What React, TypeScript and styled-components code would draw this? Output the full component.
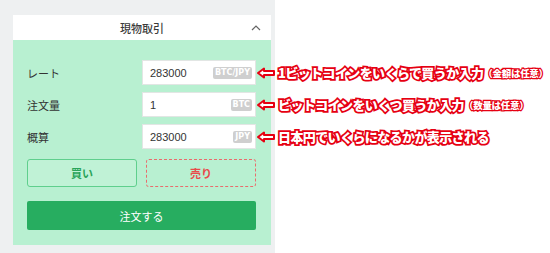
import React from "react";
import styled, { createGlobalStyle } from "styled-components";

const Global = createGlobalStyle`
  html, body { margin: 0; padding: 0; background: #ffffff; }
  body { font-family: "Noto Sans CJK JP", "Noto Sans", sans-serif; }
  * { box-sizing: border-box; }
`;

const Page = styled.div`
  position: relative;
  width: 550px;
  height: 253px;
  overflow: hidden;
`;

const Column = styled.div`
  width: 275px;
  height: 253px;
  background: #eef0f1;
  padding: 15px 4px 0 13px;
`;

const Panel = styled.div`
  width: 258px;
  display: flex;
  flex-direction: column;
`;

const Header = styled.div`
  height: 25px;
  background: #ffffff;
  display: flex;
  align-items: center;
  justify-content: center;
  position: relative;
  font-size: 11px;
  font-weight: 500;
  color: #3a3a3a;
`;

const Chevron = styled.svg`
  position: absolute;
  right: 10px;
  top: 9px;
`;

const Body = styled.div`
  background: #b8f0d1;
  padding: 20px 15px 15px 14px;
  display: flex;
  flex-direction: column;
`;

const Row = styled.div<{ $gap?: number }>`
  display: flex;
  align-items: center;
  justify-content: space-between;
  height: 25px;
  margin-bottom: ${(p) => p.$gap ?? 7}px;
`;

const Label = styled.span`
  font-size: 11px;
  color: #333;
`;

const Field = styled.div`
  width: 114px;
  height: 25px;
  background: #fff;
  border: 1px solid #e2e6e4;
  display: flex;
  align-items: center;
  justify-content: space-between;
  padding: 0 3px 0 7px;
  font-family: "Liberation Sans", Arial, sans-serif;
  font-size: 11px;
  color: #333;
`;

const Unit = styled.span`
  background: #cfcfcf;
  color: #fff;
  font-family: "DejaVu Sans", sans-serif;
  font-weight: bold;
  font-size: 8px;
  line-height: 12px;
  padding: 0 2px;
  border-radius: 2px;
`;

const Sides = styled.div`
  display: flex;
  gap: 9px;
  margin-top: 3px;
  width: 229px;
`;

const SideButton = styled.div<{ $sell?: boolean }>`
  flex: 1;
  height: 28px;
  display: flex;
  align-items: center;
  justify-content: center;
  font-size: 11px;
  font-weight: bold;
  border-radius: 3px;
  border: ${(p) => (p.$sell ? "1px dashed #e86d6d" : "1px solid #5fcf8d")};
  color: ${(p) => (p.$sell ? "#e94a4a" : "#2aa45a")};
  background: ${(p) => (p.$sell ? "transparent" : "#c0f2d6")};
`;

const OrderButton = styled.div`
  margin-top: 14px;
  width: 229px;
  height: 29px;
  background: #27ad60;
  border-radius: 2px;
  color: #fff;
  font-size: 11px;
  display: flex;
  align-items: center;
  justify-content: center;
`;

const Note = styled.div<{ $top: number }>`
  position: absolute;
  left: 256px;
  top: ${(p) => p.$top}px;
  display: flex;
  align-items: center;
  white-space: nowrap;
`;

const NoteText = styled.span<{ $small?: boolean }>`
  font-family: "Noto Sans CJK JP", sans-serif;
  font-weight: 900;
  font-size: ${(p) => (p.$small ? 9.5 : 13)}px;
  letter-spacing: ${(p) => (p.$small ? -0.3 : -0.6)}px;
  color: #fff;
  -webkit-text-stroke: ${(p) => (p.$small ? 2.5 : 3.5)}px #e60012;
  paint-order: stroke fill;
  margin-left: ${(p) => (p.$small ? 0 : 2)}px;
`;

const Arrow = () => (
  <svg width="20" height="12" viewBox="0 0 20 12">
    <path
      d="M2 6 L8 1.5 L8 4 L18 4 L18 8 L8 8 L8 10.5 Z"
      fill="#fff"
      stroke="#e60012"
      strokeWidth="2"
      strokeLinejoin="round"
    />
  </svg>
);

export default function App() {
  return (
    <Page>
      <Global />
      <Column>
        <Panel>
          <Header>
            現物取引
            <Chevron width="10" height="7" viewBox="0 0 10 7">
              <path d="M1 6 L5 2 L9 6" fill="none" stroke="#666" strokeWidth="1.2" />
            </Chevron>
          </Header>
          <Body>
            <Row>
              <Label>レート</Label>
              <Field>
                283000<Unit>BTC/JPY</Unit>
              </Field>
            </Row>
            <Row>
              <Label>注文量</Label>
              <Field>
                1<Unit>BTC</Unit>
              </Field>
            </Row>
            <Row>
              <Label>概算</Label>
              <Field>
                283000<Unit>JPY</Unit>
              </Field>
            </Row>
            <Sides>
              <SideButton>買い</SideButton>
              <SideButton $sell>売り</SideButton>
            </Sides>
            <OrderButton>注文する</OrderButton>
          </Body>
        </Panel>
      </Column>
      <Note $top={63}>
        <Arrow />
        <NoteText>1ビットコインをいくらで買うか入力</NoteText>
        <NoteText $small>（金額は任意）</NoteText>
      </Note>
      <Note $top={95}>
        <Arrow />
        <NoteText>ビットコインをいくつ買うか入力</NoteText>
        <NoteText $small>（数量は任意）</NoteText>
      </Note>
      <Note $top={127}>
        <Arrow />
        <NoteText>日本円でいくらになるかが表示される</NoteText>
      </Note>
    </Page>
  );
}
